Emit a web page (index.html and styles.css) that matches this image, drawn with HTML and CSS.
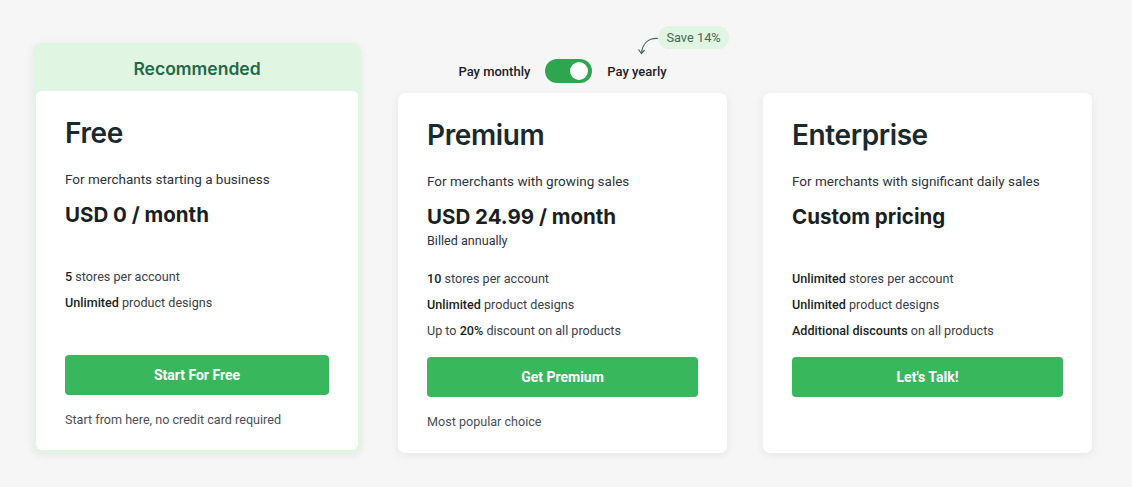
FILE: index.html
```html
<!DOCTYPE html>
<html>
<head>
<meta charset="utf-8">
<link rel="stylesheet" href="styles.css">
</head>
<body>
<div class="plans">
  <div class="recommended">
    <div class="rec-label">Recommended</div>
    <div class="card card-inner">
      <h2 class="title">Free</h2>
      <p class="sub">For merchants starting a business</p>
      <div class="price">USD 0 / month</div>
      <div class="billed"></div>
      <ul class="features">
        <li><b>5</b> stores per account</li>
        <li><b>Unlimited</b> product designs</li>
      </ul>
      <button class="btn">Start For Free</button>
      <p class="note">Start from here, no credit card required</p>
    </div>
  </div>

  <div class="col">
    <div class="toggle-row">
      <span class="tlabel">Pay monthly</span>
      <span class="switch"><span class="knob"></span></span>
      <span class="tlabel">Pay yearly</span>
      <div class="save">
        <svg class="arrow" width="22" height="22" viewBox="0 0 22 22"><path d="M21 2.5 C13 2 6 6 4.5 16.5" fill="none" stroke="#3f6f5a" stroke-width="1.2"/><path d="M1.5 13.5 L4.5 17.5 L7.5 14" fill="none" stroke="#3f6f5a" stroke-width="1.2"/></svg>
        <span class="pill">Save 14%</span>
      </div>
    </div>
    <div class="card">
      <h2 class="title">Premium</h2>
      <p class="sub">For merchants with growing sales</p>
      <div class="price">USD 24.99 / month</div>
      <div class="billed">Billed annually</div>
      <ul class="features">
        <li><b>10</b> stores per account</li>
        <li><b>Unlimited</b> product designs</li>
        <li>Up to <b>20%</b> discount on all products</li>
      </ul>
      <button class="btn">Get Premium</button>
      <p class="note">Most popular choice</p>
    </div>
  </div>

  <div class="card">
    <h2 class="title">Enterprise</h2>
    <p class="sub">For merchants with significant daily sales</p>
    <div class="price">Custom pricing</div>
    <div class="billed"></div>
    <ul class="features">
      <li><b>Unlimited</b> stores per account</li>
      <li><b>Unlimited</b> product designs</li>
      <li><b>Additional discounts</b> on all products</li>
    </ul>
    <button class="btn">Let's Talk!</button>
  </div>
</div>
</body>
</html>
```

FILE: styles.css
```css
* { box-sizing: border-box; }
html, body { margin: 0; padding: 0; }
body {
  background: #f6f6f6;
  font-family: Roboto, "Liberation Sans", Arial, sans-serif;
  color: #2c3340;
  width: 1132px;
  height: 487px;
  overflow: hidden;
}
.plans {
  display: flex;
  align-items: flex-end;
  gap: 36px;
  padding: 0 0 0 33px;
  height: 453px;
}
.recommended {
  width: 328px;
  margin-right: 1px;
  background: #e1f5e3;
  border-radius: 8px;
  padding: 0 3px 3px;
  box-shadow: 0 2px 8px rgba(0,0,0,0.07);
}
.rec-label {
  height: 48px;
  display: flex;
  align-items: center;
  justify-content: center;
  font-family: Inter, "Noto Sans", sans-serif;
  font-weight: 600;
  font-size: 17.5px;
  color: #1f6a48;
  padding-top: 2px;
}
.col {
  display: flex;
  flex-direction: column;
  align-items: center;
  gap: 10px;
}
.toggle-row {
  position: relative;
  display: flex;
  align-items: center;
  gap: 15px;
  height: 24px;
}
.tlabel {
  font-size: 13px;
  font-weight: 500;
  color: #1e2228;
  white-space: nowrap;
}
.switch {
  width: 47px;
  height: 24px;
  border-radius: 12px;
  background: #2ea64f;
  position: relative;
  display: block;
}
.knob {
  position: absolute;
  right: 4px;
  top: 3px;
  width: 18px;
  height: 18px;
  border-radius: 50%;
  background: #fff;
}
.save {
  position: absolute;
  left: 179px;
  top: -33px;
  display: flex;
  align-items: flex-start;
}
.arrow { margin-top: 10px; margin-right: -1px; flex: none; }
.pill {
  background: #e1f5e3;
  color: #3f6b56;
  font-size: 12.8px;
  height: 23px;
  line-height: 23px;
  padding: 0 8px;
  border-radius: 12px;
  white-space: nowrap;
}
.card {
  width: 329px;
  height: 360px;
  background: #fff;
  border-radius: 7px;
  padding: 25px 29px 0;
  box-shadow: 0 2px 8px rgba(0,0,0,0.07);
}
.card-inner {
  width: 322px;
  height: 359px;
  box-shadow: none;
  border-radius: 6px;
}
.title {
  margin: 0;
  font-family: Inter, "Noto Sans", sans-serif;
  font-weight: 600;
  font-size: 28px;
  line-height: 34px;
  color: #182a30;
  letter-spacing: -0.4px;
}
.sub {
  margin: 19px 0 0;
  font-size: 13.5px;
  line-height: 20px;
  color: #2c3340;
}
.price {
  margin-top: 12px;
  font-family: Inter, "Noto Sans", sans-serif;
  font-weight: 650;
  font-size: 20.5px;
  line-height: 28px;
  color: #1a1f24;
  letter-spacing: 0;
}
.billed {
  margin-top: 1px;
  height: 18px;
  font-size: 12.6px;
  line-height: 18px;
  color: #2c3340;
}
.features {
  list-style: none;
  margin: 20px 0 0;
  padding: 0;
  display: flex;
  flex-direction: column;
  gap: 8px;
  height: 70px;
}
.features li {
  font-size: 12.6px;
  line-height: 18px;
  color: #3a404c;
  white-space: nowrap;
}
.features b { font-weight: 500; color: #1a1f24; }
.btn {
  display: block;
  width: 100%;
  margin-top: 17px;
  height: 40px;
  border: 0;
  border-radius: 4px;
  background: #39b75d;
  color: #fff;
  font-family: Roboto, sans-serif;
  font-weight: 700;
  font-size: 14px;
}
.note {
  margin: 16px 0 0;
  font-size: 12.6px;
  line-height: 18px;
  color: #4a4f5a;
}
```
